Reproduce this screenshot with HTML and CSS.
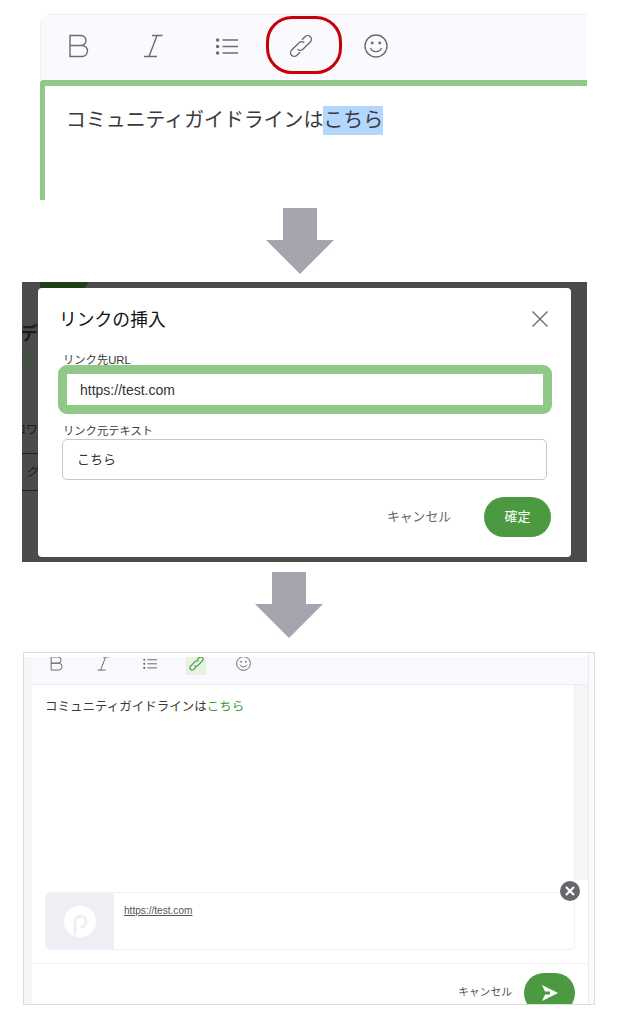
FILE: index.html
```html
<!DOCTYPE html>
<html lang="ja">
<head>
  <meta charset="UTF-8">
  <meta name="viewport" content="width=device-width, initial-scale=1.0">
  <title>リンクの挿入</title>
  <link rel="stylesheet" href="styles.css">
</head>
<body>

  <svg class="sprite" aria-hidden="true">
    <symbol id="i-bold" viewBox="0 0 24 24">
      <path d="M5 1.5h11a5 5 0 0 1 0 10H5zM5 11.5h12a5.5 5.5 0 0 1 0 11H5z"/>
    </symbol>
    <symbol id="i-italic" viewBox="0 0 24 24">
      <path d="M12 1.5h10.5M4 22.5h13M17 1.5 9 22.5"/>
    </symbol>
    <symbol id="i-list" viewBox="0 0 24 24">
      <path d="M8.6 6h15.4M8.6 12.5h15.4M8.6 19h15.4"/>
      <circle class="fill" cx="3.6" cy="6" r="1.7"/>
      <circle class="fill" cx="3.6" cy="12.5" r="1.7"/>
      <circle class="fill" cx="3.6" cy="19" r="1.7"/>
    </symbol>
    <symbol id="i-link" viewBox="0 0 24 24">
      <g transform="rotate(-45 12 12)">
        <path d="M7 15.7H2.5a3.7 3.7 0 0 1 0-7.4H13a3.7 3.7 0 0 1 3.7 3.7"/>
        <path d="M17 8.3h4.5a3.7 3.7 0 0 1 0 7.4H11a3.7 3.7 0 0 1-3.7-3.7"/>
      </g>
    </symbol>
    <symbol id="i-smile" viewBox="0 0 24 24">
      <circle cx="12" cy="12" r="11"/>
      <path d="M6.5 14a6 6 0 0 0 11 0"/>
      <circle class="fill" cx="8.2" cy="9" r="1.4"/>
      <circle class="fill" cx="15.8" cy="9" r="1.4"/>
    </symbol>
  </svg>

  <!-- step 1 -->
  <section class="step-one">
    <div class="toolbar">
      <svg class="tool"><use href="#i-bold"/></svg>
      <svg class="tool"><use href="#i-italic"/></svg>
      <svg class="tool"><use href="#i-list"/></svg>
      <svg class="tool"><use href="#i-link"/></svg>
      <svg class="tool"><use href="#i-smile"/></svg>
      <div class="red-ring"></div>
    </div>
    <div class="editor">コミュニティガイドラインは<span class="selected">こちら</span></div>
  </section>

  <svg class="arrow arrow-one" viewBox="0 0 68 66"><polygon points="17,0 51,0 51,32 68,32 34,66 0,32 17,32"/></svg>

  <!-- step 2 -->
  <section class="step-two">
    <div class="backdrop-top"><div class="backdrop-chip"></div></div>
    <div class="backdrop-row">
      <div class="gutter">
        <div class="g-title">デ</div>
        <div class="g-sub">(デ</div>
        <div class="g-row">ロワ</div>
        <div class="g-row g-last">グ</div>
      </div>
      <div class="modal">
        <div class="modal-head">
          <h2>リンクの挿入</h2>
          <svg class="close" viewBox="0 0 16 16"><path d="M.5.5l15 15M15.5.5l-15 15"/></svg>
        </div>
        <label class="field-label first">リンク先URL</label>
        <input class="url-input" type="text" value="https://test.com">
        <label class="field-label second">リンク元テキスト</label>
        <input class="text-input" type="text" value="こちら">
        <div class="modal-actions">
          <span class="cancel">キャンセル</span>
          <button class="confirm" type="button">確定</button>
        </div>
      </div>
    </div>
  </section>

  <svg class="arrow arrow-two" viewBox="0 0 68 66"><polygon points="17,0 51,0 51,32 68,32 34,66 0,32 17,32"/></svg>

  <!-- step 3 -->
  <section class="step-three">
    <div class="side-left"></div>
    <div class="main">
      <div class="mini-toolbar">
        <span class="mini"><svg><use href="#i-bold"/></svg></span>
        <span class="mini"><svg><use href="#i-italic"/></svg></span>
        <span class="mini"><svg><use href="#i-list"/></svg></span>
        <span class="mini active"><svg><use href="#i-link"/></svg></span>
        <span class="mini"><svg><use href="#i-smile"/></svg></span>
      </div>
      <div class="result">
        <div class="result-text">コミュニティガイドラインは<a class="result-link">こちら</a></div>
        <div class="scroll-track"></div>
      </div>
      <div class="card">
        <div class="thumb">
          <svg viewBox="0 0 32 33" width="32" height="33">
            <circle class="logo-disc" cx="16" cy="16.5" r="16"/>
            <path class="logo-cut" d="M11 30V16.5a5.5 5.5 0 1 1 5.5 5.5"/>
          </svg>
        </div>
        <a class="card-url">https://test.com</a>
      </div>
      <div class="result-actions">
        <span class="cancel-small">キャンセル</span>
        <button class="send" type="button">
          <svg viewBox="0 0 16 16" width="16" height="16"><path d="M0 0 16 8 0 16 3 9.5h5v-3H3z"/></svg>
        </button>
      </div>
    </div>
    <div class="side-right"></div>
    <div class="badge">
      <svg viewBox="0 0 10 10" width="10" height="10"><path d="M1 1l8 8M9 1l-8 8"/></svg>
    </div>
  </section>

</body>
</html>
```

FILE: styles.css
```css
* {
  box-sizing: border-box;
}

body {
  margin: 0;
  padding-top: 14px;
  background-color: white;
  font-family: 'Liberation Sans', 'Noto Sans CJK JP', sans-serif;
  color: #3a3a3a;
}

.sprite {
  display: none;
}

svg {
  fill: none;
  stroke: #6b6b72;
  stroke-width: 1.4;
}

.fill {
  fill: #6b6b72;
  stroke: none;
}

/* arrows between the steps */
.arrow {
  display: block;
  width: 68px;
  height: 66px;
}

.arrow polygon {
  fill: #a5a6ad;
  stroke: none;
}

.arrow-one {
  margin: 8px 0 0 266px;
}

.arrow-two {
  margin: 10px 0 0 255px;
}

/* step 1 */
.step-one {
  width: 547px;
  height: 186px;
  margin-left: 40px;
  overflow: hidden;
  border-top-left-radius: 10px;
}

.toolbar {
  position: relative;
  display: flex;
  align-items: center;
  gap: 50.7px;
  height: 66px;
  padding: 0 0 4px 24px;
  background-color: #faf9fe;
  border-top: 1px solid #f0f0f4;
  border-left: 1px solid #f0f0f4;
}

.tool {
  width: 24px;
  height: 24px;
  flex-shrink: 0;
}

.red-ring {
  position: absolute;
  left: 225px;
  top: 1px;
  width: 76px;
  height: 58px;
  border: 3px solid #c8000a;
  border-radius: 26px;
}

.editor {
  height: 120px;
  padding: 20px 0 0 21px;
  border-top: 6px solid #90c888;
  border-left: 5px solid #90c888;
  border-top-left-radius: 4px;
  font-size: 19.9px;
  line-height: 29px;
  white-space: nowrap;
}

.selected {
  display: inline-block;
  background-color: #b3d7ff;
}

/* step 2 */
.step-two {
  width: 565px;
  height: 280px;
  margin: 8px 0 0 22px;
  background-color: #4b4b4b;
  overflow: hidden;
}

.backdrop-top {
  height: 6px;
}

.backdrop-chip {
  width: 48px;
  height: 6px;
  margin-left: 18px;
  background-color: #1d3f14;
  border-bottom-right-radius: 10px;
}

.backdrop-row {
  display: flex;
}

.gutter {
  width: 16px;
  flex-shrink: 0;
  overflow: hidden;
  white-space: nowrap;
  color: #1c1c1c;
}

.g-title {
  direction: rtl;
  margin-top: 34px;
  margin-left: -6px;
  font-size: 18px;
  line-height: 24px;
  font-weight: bold;
}

.g-sub {
  margin-top: 4px;
  text-indent: -2px;
  font-size: 12px;
  line-height: 16px;
  color: #2c5a24;
}

.g-row {
  height: 37px;
  padding-top: 5px;
  margin-top: 51px;
  text-indent: -8px;
  font-size: 12px;
  line-height: 16px;
  border-bottom: 1px solid #222;
}

.g-last {
  margin-top: 0;
  padding-top: 10px;
  text-indent: 4px;
  font-style: italic;
}

.modal {
  width: 533px;
  height: 269px;
  background-color: white;
  border-radius: 4px;
}

.modal-head {
  display: flex;
  justify-content: space-between;
  align-items: flex-start;
  padding: 19px 23px 0 21px;
}

.modal-head h2 {
  margin: 2px 0 0;
  font-size: 17.8px;
  line-height: 23px;
  font-weight: normal;
  color: #111;
}

.close {
  width: 16px;
  height: 16px;
  margin-top: 4px;
}

.field-label {
  display: block;
  margin-left: 25px;
  font-size: 11.3px;
  line-height: 14px;
}

.field-label.first {
  margin-top: 21px;
}

.field-label.second {
  margin-top: 10px;
}

input {
  display: block;
  font-family: inherit;
  color: #333;
  outline: none;
  background-color: white;
}

.url-input {
  width: 494px;
  height: 49px;
  margin: -2px 0 0 20px;
  padding: 1px 0 0 13px;
  border: 9px solid #90c888;
  border-radius: 9px;
  font-size: 14px;
}

.text-input {
  width: 485px;
  height: 41px;
  margin: 1px 0 0 24px;
  padding: 0 0 2px 14px;
  border: 1px solid #c8c8c8;
  border-radius: 5px;
  font-size: 13px;
}

.modal-actions {
  display: flex;
  justify-content: flex-end;
  align-items: center;
  gap: 33px;
  margin-top: 17px;
  padding-right: 20px;
}

.cancel {
  margin-top: -4px;
  font-size: 12.8px;
  color: #666;
}

.confirm {
  width: 67px;
  height: 40px;
  padding: 0 0 4px;
  border: none;
  border-radius: 20px;
  background-color: #4b9a41;
  color: white;
  font-family: inherit;
  font-size: 13px;
}

/* step 3 */
.step-three {
  position: relative;
  display: flex;
  width: 572px;
  height: 353px;
  margin: 14px 0 0 23px;
  padding-top: 4px;
  border: 1px solid #dcdce0;
  overflow: hidden;
}

.side-left {
  width: 8px;
  flex-shrink: 0;
  background-color: #f6f6f9;
}

.main {
  width: 556px;
  flex-shrink: 0;
}

.side-right {
  width: 6px;
  margin-top: -4px;
  flex-shrink: 0;
  border-left: 1px solid #ececf0;
  background-color: #fbfbfd;
}

.mini-toolbar {
  display: flex;
  gap: 27px;
  height: 28px;
  padding-left: 13px;
  background-color: #f9f9fd;
  border-bottom: 1px solid #eeeef2;
}

.mini {
  display: block;
  width: 20px;
  height: 18px;
  overflow: hidden;
  text-align: center;
}

.mini svg {
  width: 15px;
  height: 15px;
  margin-top: -1px;
  stroke-width: 1.6;
}

.mini.active {
  background-color: #e6f2e3;
}

.mini.active svg {
  stroke: #3f9a3a;
  stroke-width: 1.8;
}

.result {
  display: flex;
  justify-content: space-between;
  height: 195px;
}

.result-text {
  padding: 13px 0 0 13px;
  font-size: 12.5px;
  line-height: 18px;
}

.result-link {
  color: #3f9a3a;
}

.scroll-track {
  width: 14px;
  background-color: #f6f6f9;
  border-left: 1px solid #ececf0;
}

.card {
  display: flex;
  width: 530px;
  height: 58px;
  margin: 12px 0 0 13px;
  border: 1px solid #f0f0f5;
  border-radius: 6px;
  overflow: hidden;
}

.thumb {
  display: flex;
  justify-content: center;
  align-items: center;
  width: 68px;
  background-color: #eeeff5;
}

.logo-disc {
  fill: white;
  stroke: none;
}

.logo-cut {
  stroke: #eeeff5;
  stroke-width: 3;
}

.card-url {
  margin: 12px 0 0 10px;
  font-size: 10.1px;
  line-height: 12px;
  color: #555;
  text-decoration: underline;
}

.result-actions {
  display: flex;
  justify-content: flex-end;
  align-items: flex-start;
  gap: 12px;
  margin-top: 13px;
  padding: 9px 13px 0 0;
  border-top: 1px solid #f2f2f5;
}

.cancel-small {
  margin-top: 11px;
  font-size: 10.8px;
  line-height: 16px;
  color: #555;
}

.send {
  display: flex;
  justify-content: center;
  align-items: center;
  width: 51px;
  height: 40px;
  padding: 0;
  border: none;
  border-radius: 20px;
  background-color: #4b9a41;
}

.send svg {
  fill: white;
  stroke: none;
}

.badge {
  position: absolute;
  left: 536px;
  top: 228px;
  display: flex;
  justify-content: center;
  align-items: center;
  width: 20px;
  height: 20px;
  border-radius: 50%;
  background-color: #66666e;
}

.badge svg {
  stroke: white;
  stroke-width: 2.2;
}
```
